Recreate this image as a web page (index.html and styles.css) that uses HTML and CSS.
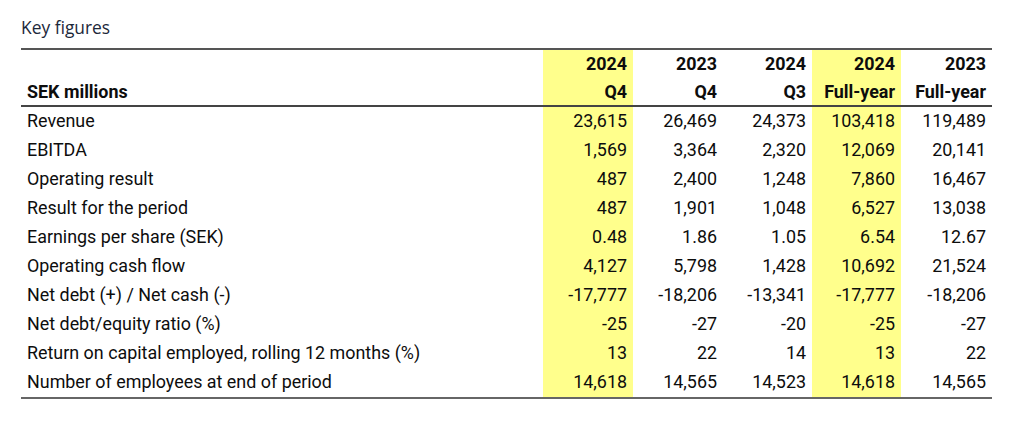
FILE: index.html
```html
<!DOCTYPE html>
<html lang="en">
<head>
<meta charset="utf-8">
<title>Key figures</title>
<link rel="stylesheet" href="styles.css">
</head>
<body>
<div class="page">
  <h1 class="title">Key figures</h1>
  <table class="kf">
    <colgroup>
      <col class="c-label">
      <col class="c-90">
      <col class="c-90">
      <col class="c-89">
      <col class="c-89">
      <col class="c-91">
    </colgroup>
    <thead>
      <tr class="h1">
        <th class="label"></th>
        <th class="hl">2024</th>
        <th>2023</th>
        <th>2024</th>
        <th class="hl">2024</th>
        <th>2023</th>
      </tr>
      <tr class="h2">
        <th class="label">SEK millions</th>
        <th class="hl">Q4</th>
        <th>Q4</th>
        <th>Q3</th>
        <th class="hl">Full-year</th>
        <th>Full-year</th>
      </tr>
    </thead>
    <tbody>
      <tr><td class="label">Revenue</td><td class="hl">23,615</td><td>26,469</td><td>24,373</td><td class="hl">103,418</td><td>119,489</td></tr>
      <tr><td class="label">EBITDA</td><td class="hl">1,569</td><td>3,364</td><td>2,320</td><td class="hl">12,069</td><td>20,141</td></tr>
      <tr><td class="label">Operating result</td><td class="hl">487</td><td>2,400</td><td>1,248</td><td class="hl">7,860</td><td>16,467</td></tr>
      <tr><td class="label">Result for the period</td><td class="hl">487</td><td>1,901</td><td>1,048</td><td class="hl">6,527</td><td>13,038</td></tr>
      <tr><td class="label">Earnings per share (SEK)</td><td class="hl">0.48</td><td>1.86</td><td>1.05</td><td class="hl">6.54</td><td>12.67</td></tr>
      <tr><td class="label">Operating cash flow</td><td class="hl">4,127</td><td>5,798</td><td>1,428</td><td class="hl">10,692</td><td>21,524</td></tr>
      <tr><td class="label">Net debt (+) / Net cash (-)</td><td class="hl">-17,777</td><td>-18,206</td><td>-13,341</td><td class="hl">-17,777</td><td>-18,206</td></tr>
      <tr><td class="label">Net debt/equity ratio (%)</td><td class="hl">-25</td><td>-27</td><td>-20</td><td class="hl">-25</td><td>-27</td></tr>
      <tr><td class="label">Return on capital employed, rolling 12 months (%)</td><td class="hl">13</td><td>22</td><td>14</td><td class="hl">13</td><td>22</td></tr>
      <tr><td class="label">Number of employees at end of period</td><td class="hl">14,618</td><td>14,565</td><td>14,523</td><td class="hl">14,618</td><td>14,565</td></tr>
    </tbody>
  </table>
</div>
</body>
</html>
```
FILE: styles.css
```css
html, body {
  margin: 0;
  padding: 0;
  background: #ffffff;
}

.page {
  padding: 15px 18px 0 21px;
}

.title {
  margin: 0 0 9px 0;
  font-family: "Open Sans", "Liberation Sans", sans-serif;
  font-weight: 400;
  font-size: 17.4px;
  line-height: 24px;
  color: #1c283a;
}

.kf {
  width: 971px;
  table-layout: fixed;
  border-collapse: separate;
  border-spacing: 0;
  border-top: 2px solid #555555;
  border-bottom: 2px solid #666666;
  font-family: Roboto, "Liberation Sans", sans-serif;
  font-size: 17.9px;
  color: #0d0d0d;
}

.c-label { width: 522px; }
.c-90 { width: 90px; }
.c-89 { width: 89px; }
.c-91 { width: 91px; }

.kf th,
.kf td {
  padding: 0 6px 0 6px;
  text-align: right;
  white-space: nowrap;
  vertical-align: top;
}

.kf th {
  font-weight: 700;
}

.kf .label {
  text-align: left;
}

.kf .h1 th {
  line-height: 27px;
  padding-bottom: 1px;
}

.kf .h2 th {
  line-height: 27px;
  border-bottom: 2px solid #444444;
}

.kf td {
  line-height: 28px;
  padding-bottom: 1px;
}

.kf .hl {
  background: #ffff8c;
}
```
